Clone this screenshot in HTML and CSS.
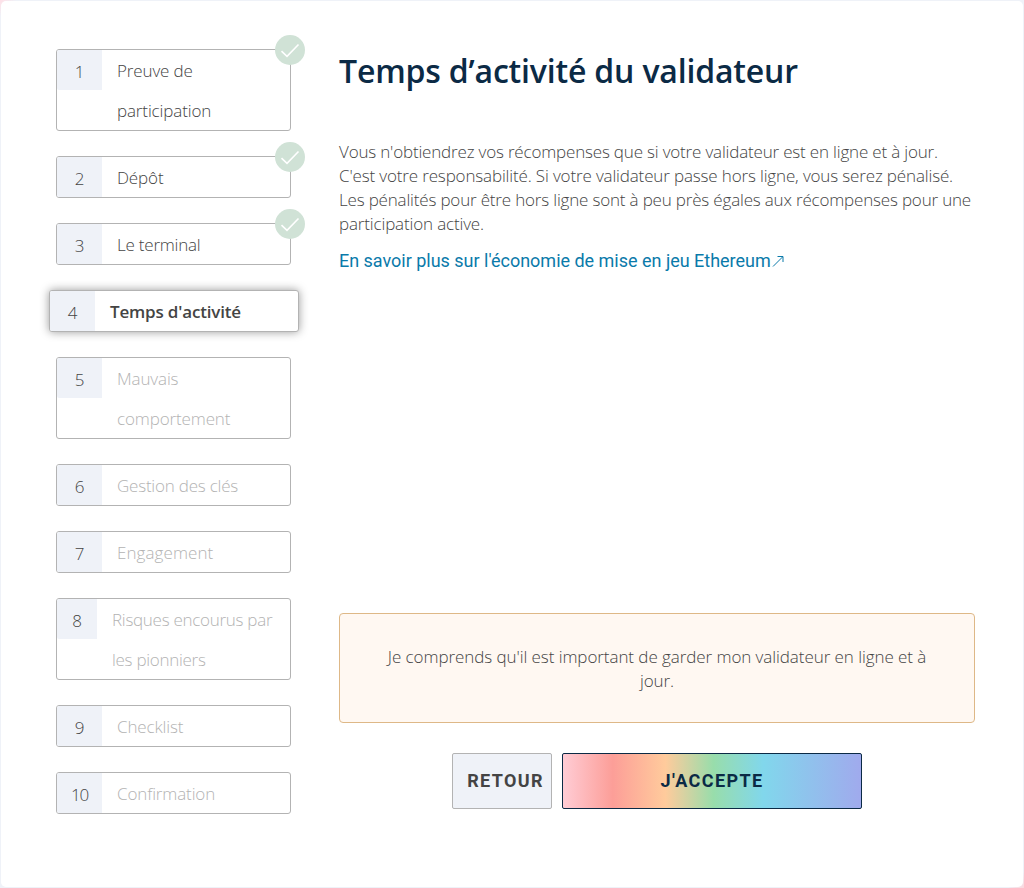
FILE: index.html
```html
<!DOCTYPE html>
<html lang="fr">
<head>
<meta charset="utf-8">
<title>Temps d’activité du validateur</title>
<link rel="stylesheet" href="styles.css">
</head>
<body>
<main class="card">
  <ol class="steps">
    <li class="step done"><span class="num">1</span><span class="label">Preuve de<br>participation</span><span class="check"><svg viewBox="0 0 30 30"><path d="M6.5 16.2 12 21.3 23.5 9.5"/></svg></span></li>
    <li class="step done"><span class="num">2</span><span class="label">Dépôt</span><span class="check"><svg viewBox="0 0 30 30"><path d="M6.5 16.2 12 21.3 23.5 9.5"/></svg></span></li>
    <li class="step done"><span class="num">3</span><span class="label snug">Le terminal</span><span class="check"><svg viewBox="0 0 30 30"><path d="M6.5 16.2 12 21.3 23.5 9.5"/></svg></span></li>
    <li class="step active"><span class="num">4</span><span class="label">Temps d'activité</span></li>
    <li class="step todo"><span class="num">5</span><span class="label">Mauvais<br>comportement</span></li>
    <li class="step todo"><span class="num">6</span><span class="label snug">Gestion des clés</span></li>
    <li class="step todo"><span class="num">7</span><span class="label wide">Engagement</span></li>
    <li class="step todo compact"><span class="num">8</span><span class="label">Risques encourus par<br>les pionniers</span></li>
    <li class="step todo"><span class="num">9</span><span class="label">Checklist</span></li>
    <li class="step todo"><span class="num double">10</span><span class="label">Confirmation</span></li>
  </ol>
  <section class="content">
    <h1>Temps d’activité du validateur</h1>
    <p class="intro">Vous n'obtiendrez vos récompenses que si votre validateur est en ligne et à jour.<br><span class="line-loose">C'est votre responsabilité. Si votre validateur passe hors ligne, vous serez pénalisé.</span><br>Les pénalités pour être hors ligne sont à peu près égales aux récompenses pour une<br><span class="line-loose">participation active.</span></p>
    <a class="link" href="#">En savoir plus sur l'économie de mise en jeu Ethereum<svg class="ext" viewBox="0 0 14 14"><path d="M2 12.5 11.5 3M6.5 2.5H12V8"/></svg></a>
    <div class="notice">Je comprends qu'il est important de garder mon validateur en ligne et à<br>jour.</div>
    <div class="actions">
      <button class="btn back">RETOUR</button>
      <button class="btn accept">J'ACCEPTE</button>
    </div>
  </section>
</main>
</body>
</html>
```

FILE: styles.css
```css
* { box-sizing: border-box; }
body {
  margin: 0;
  background: linear-gradient(135deg, #ffdfe6 0, #eff2f8 12px, #eff2f8 calc(100% - 12px), #fbd5dc 100%);
  font-family: "Open Sans", "Noto Sans", sans-serif;
  font-size: 17px;
  font-weight: 300;
  color: #444;
}
.card {
  height: 886px;
  margin: 1px;
  padding: 48px 48px 0 55px;
  border-radius: 5px;
  background: #fff;
  display: flex;
  gap: 48px;
}
.steps {
  list-style: none;
  margin: 0;
  padding: 0;
  width: 235px;
  flex: none;
  display: flex;
  flex-direction: column;
  gap: 25px;
}
.step {
  position: relative;
  display: flex;
  align-items: flex-start;
  border: 1px solid #b3b3b3;
  border-radius: 3px;
  background: #fff;
  line-height: 40px;
}
.num {
  width: 45px;
  height: 40px;
  padding-top: 2px;
  background: #eff2f8;
  text-align: center;
  border-radius: 2px 0 0 2px;
}
.double { letter-spacing: -1.2px; }
.label { padding: 1px 0 0 15px; height: 40px; white-space: nowrap; letter-spacing: -.13px; }
.label:has(br) { height: 80px; }
.label.snug { letter-spacing: -.22px; }
.label.wide { letter-spacing: .08px; }
.compact .num { width: 40px; }
.compact .label { letter-spacing: -.28px; }
.todo .label { color: #b3b3b3; }
.active { margin: 0 -8px 0 -7px; box-shadow: 0 0 10px rgba(0, 0, 0, .4); }
.active .label { font-weight: 600; letter-spacing: -.17px; }
.check {
  position: absolute;
  top: -15px;
  right: -15px;
  width: 30px;
  height: 30px;
  border-radius: 50%;
  background: #d0e2d6;
}
.check svg { display: block; fill: none; stroke: #fff; stroke-width: 1.6; }
.content { width: 636px; display: flex; flex-direction: column; align-items: flex-start; }
h1 {
  margin: 0;
  font-size: 32px;
  font-weight: 600;
  line-height: 44px;
  letter-spacing: -.18px;
  color: #0b2a45;
  white-space: nowrap;
}
.intro { margin: 47px 0 0; line-height: 24px; white-space: nowrap; letter-spacing: -.18px; }
.line-loose { letter-spacing: -.15px; }
.link {
  display: flex;
  align-items: center;
  margin-top: 13px;
  font: 400 18px/24px Roboto, sans-serif;
  letter-spacing: -.015px;
  color: #0a7aaa;
  text-decoration: none;
  white-space: nowrap;
}
.ext { width: 14px; height: 14px; fill: none; stroke: currentColor; stroke-width: 1; }
.notice {
  width: 636px;
  height: 110px;
  margin-top: 340px;
  padding: 31px 0 0;
  border: 1px solid #deb887;
  border-radius: 4px;
  background: #fff8f2;
  line-height: 24px;
  text-align: center;
  letter-spacing: -.07px;
  white-space: nowrap;
}
.actions { align-self: center; display: flex; gap: 10px; margin-top: 30px; }
.btn {
  height: 56px;
  padding: 0;
  border-radius: 2px;
  font: 700 18px/24px Roboto, sans-serif;
}
.back { width: 100px; padding-left: 7px; border: 1px solid #b3b3b3; background: #eff2f8; color: #444; letter-spacing: 1.35px; }
.accept {
  width: 300px;
  border: 1px solid #0b2a45;
  color: #0b2a45;
  letter-spacing: 1.4px;
  background: linear-gradient(90deg, #ffccd5 0, #fc9e98 16.66%, #ffcb9c 34.37%, #98ddab 50.52%, #81d7ec 67.19%, #a0aaed 100%);
}
```
